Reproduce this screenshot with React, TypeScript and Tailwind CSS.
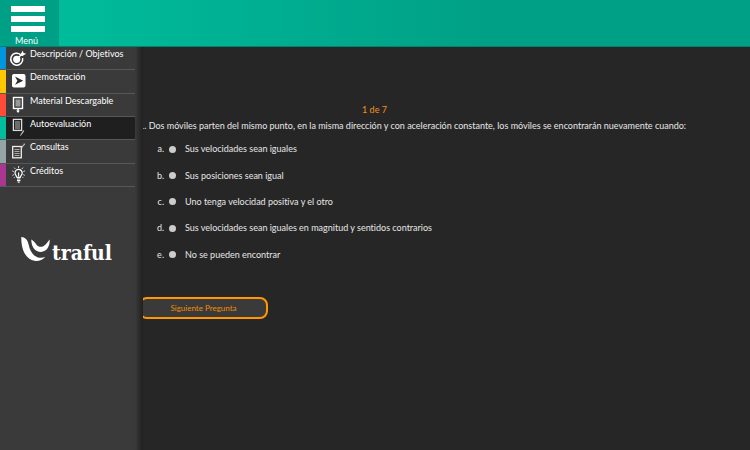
import { useState, type ReactNode } from 'react';
import clsx from 'clsx';

type Section = {
  id: string;
  label: string;
  color: string;
  icon: ReactNode;
};

const sections: Section[] = [
  {
    id: 'descripcion',
    label: 'Descripción / Objetivos',
    color: 'bg-[#0095dc]',
    icon: (
      <>
        <path d="M12.6 8.6A6 6 0 1 0 14.6 12" fill="none" stroke="#fff" strokeWidth="1.5" />
        <circle cx="8.7" cy="13.3" r="3.6" fill="#fff" />
        <path d="M10.5 11.5 15 7" stroke="#fff" strokeWidth="1.3" />
        <path d="M12.6 8.4 14.8 4.4l.7 2.7 2.7.7-3.7 2.2-1.7-.3z" fill="#fff" />
      </>
    ),
  },
  {
    id: 'demostracion',
    label: 'Demostración',
    color: 'bg-[#ffc700]',
    icon: (
      <>
        <rect x="4" y="5" width="13.5" height="13.5" rx="2" fill="#fff" />
        <path d="M7 7.6 15.2 11.7 7 15.8l2.4-4.1z" fill="#2d2d2d" />
      </>
    ),
  },
  {
    id: 'material',
    label: 'Material Descargable',
    color: 'bg-[#ff4b39]',
    icon: (
      <>
        <rect x="5.5" y="4.5" width="9" height="11" fill="none" stroke="#fff" strokeWidth="1.4" />
        <rect x="7.5" y="6.5" width="5" height="7" fill="#999" />
        <path d="M10 15v4" stroke="#fff" strokeWidth="1.4" />
        <path d="M8.2 17.6h3.6L10 20z" fill="#fff" />
      </>
    ),
  },
  {
    id: 'autoevaluacion',
    label: 'Autoevaluación',
    color: 'bg-[#00bd9c]',
    icon: (
      <>
        <rect x="5.4" y="3.4" width="8.2" height="11" fill="none" stroke="#ddd" strokeWidth="1.3" />
        <path d="M7 6h5M7 8h5M7 10h5M7 12h5" stroke="#bbb" />
        <path d="m15.8 14.5-2.6 4" stroke="#ccc" strokeWidth="1.2" />
        <path d="M12.5 18.2 12 20l1.6-1z" fill="#ccc" />
      </>
    ),
  },
  {
    id: 'consultas',
    label: 'Consultas',
    color: 'bg-[#95a5a6]',
    icon: (
      <>
        <rect x="4.7" y="7.5" width="8.6" height="11.3" fill="none" stroke="#eee" strokeWidth="1.3" />
        <path d="M6.5 10.5h5M6.5 12.5h5M6.5 14.5h5M6.5 16.5h5" stroke="#aaa" />
        <path d="M13.5 9 15.6 6" stroke="#ccc" strokeWidth="1.1" />
        <path d="m14.9 4.9 2-.5-.2 2z" fill="#ccc" />
      </>
    ),
  },
  {
    id: 'creditos',
    label: 'Créditos',
    color: 'bg-[#a9378f]',
    icon: (
      <>
        <path
          d="M9 14.4c0-1.6-2-2.2-2-4.4a3.6 3.6 0 0 1 7.2 0c0 2.2-2 2.8-2 4.4z"
          fill="none"
          stroke="#fff"
          strokeWidth="1.2"
        />
        <path d="M10.6 9.5v4M9 16h3.4M9 17.6h3.4M9.8 19.2h1.8" stroke="#fff" strokeWidth="1.1" />
        <path
          d="M10.6 5V3M7.4 6 6.2 4.6M13.8 6 15 4.6M5.8 8.6 4.2 7.8M15.4 8.6l1.6-.8M5.9 11.6l-1.5.8M15.3 11.6l1.5.8M7 13.8l-1 1M14.2 13.8l1 1"
          stroke="#ddd"
          strokeWidth="1"
        />
      </>
    ),
  },
];

const answers = [
  'Sus velocidades sean iguales',
  'Sus posiciones sean igual',
  'Uno tenga velocidad positiva y el otro',
  'Sus velocidades sean iguales en magnitud y sentidos contrarios',
  'No se pueden encontrar',
];

function TopBar() {
  return (
    <header className="flex h-[47px] border-b border-[#00836c] bg-linear-to-r from-[#00c09e] to-[#00a086] to-65%">
      <button
        type="button"
        className="flex w-[59px] flex-col items-start gap-1 bg-[#00a086] pt-[6px] pl-[11px] text-white"
      >
        <span className="h-[6px] w-[34px] shrink-0 bg-white" />
        <span className="h-[6px] w-[34px] shrink-0 bg-white" />
        <span className="h-[6px] w-[34px] shrink-0 bg-white" />
        <span className="pl-1 text-[9px] leading-[10px]">Menú</span>
      </button>
    </header>
  );
}

function Logo() {
  return (
    <a href="#inicio" className="mt-[49px] ml-[21px] flex items-start text-white">
      <svg width="30" height="26" viewBox="0 0 30 26" fill="#fff" aria-hidden="true">
        <path d="M.3 1C4 1.300 6.600 3.600 7.600 8.500 9 15 12 20 17 21.400c3 .6 4.800.3 7.300-.6-3 3.700-7.300 4.600-10.800 4C5 23.400 0 14 .3 1z" />
        <path d="M10.300 3.600C12.500 4.600 13.800 6.600 15.500 8.800c2 2.400 4.800 2.600 7.200 1.200 3-1.600 3.700-4.200 6-6.400.3 6.600-3 12.300-8.700 12.400-6-.1-9.700-5-9.700-12.400z" />
      </svg>
      <span className="mt-[5px] pl-px font-['DejaVu_Serif_Condensed','DejaVu_Serif',serif] text-[21px] leading-6 font-bold">
        traful
      </span>
    </a>
  );
}

function Sidebar({ active }: { active: string }) {
  return (
    <aside className="w-[135px] shrink-0 bg-[#3a3a3a]">
      <nav>
        <ul className="grid h-[140px] grid-rows-6">
          {sections.map((s) => (
            <li key={s.id} className="flex border-b border-[#575757]">
              <span className={clsx('w-[6px]', s.color)} />
              <a
                href={`#${s.id}`}
                className={clsx(
                  'flex flex-1 items-start pl-[2px] text-[9px] leading-[14px] whitespace-nowrap text-white',
                  s.id === active && 'bg-[#1f1f1f]',
                )}
              >
                <svg width="20" height="22" viewBox="0 1 20 22" className="shrink-0" aria-hidden="true">
                  {s.icon}
                </svg>
                <span className="pl-[2px]">{s.label}</span>
              </a>
            </li>
          ))}
        </ul>
      </nav>
      <Logo />
    </aside>
  );
}

function Question() {
  const [selected, setSelected] = useState<number | null>(null);

  return (
    <main className="flex-1 overflow-hidden pt-[56px] text-[9px] leading-[14px] text-[#e6e6e6]">
      <p className="pr-36 text-center text-[#f7931e]">1 de 7</p>
      {/* the quiz starts a little under the edge of the menu */}
      <form className="-ml-[4px]" onSubmit={(e) => e.preventDefault()}>
        <fieldset>
          <legend className="pt-[2px]">
            1. Dos móviles parten del mismo punto, en la misma dirección y con aceleración constante, los
            móviles se encontrarán nuevamente cuando:
          </legend>
          <ol className="mt-[3px] grid h-[132px] grid-rows-5 pl-[18px]">
            {answers.map((answer, i) => (
              <li key={answer} className="flex items-center">
                <label className="flex items-center">
                  <span className="w-[7px] text-right whitespace-nowrap">{'abcde'[i]}.</span>
                  <input
                    type="radio"
                    name="respuesta"
                    checked={selected === i}
                    onChange={() => setSelected(i)}
                    className="mx-[5px] size-[7px] appearance-none rounded-full bg-[#cccccc] checked:bg-[#f7931e]"
                  />
                  <span className="pl-1">{answer}</span>
                </label>
              </li>
            ))}
          </ol>
        </fieldset>
        <button
          type="submit"
          className="mt-[29px] h-[22px] w-[129px] rounded-lg border-2 border-[#ff9800] bg-[#3a3a3a] text-[8px] leading-[14px] text-[#f08c00]"
        >
          Siguiente Pregunta
        </button>
      </form>
    </main>
  );
}

export default function App() {
  return (
    <div className="flex min-h-screen flex-col bg-[#262626] font-[Lato,sans-serif] [font-variant-ligatures:none]">
      <TopBar />
      <div className="flex flex-1">
        <Sidebar active="autoevaluacion" />
        <div className="w-2 shrink-0 bg-linear-to-r from-[#3a3a3a] to-[#202020]" />
        <Question />
      </div>
    </div>
  );
}
